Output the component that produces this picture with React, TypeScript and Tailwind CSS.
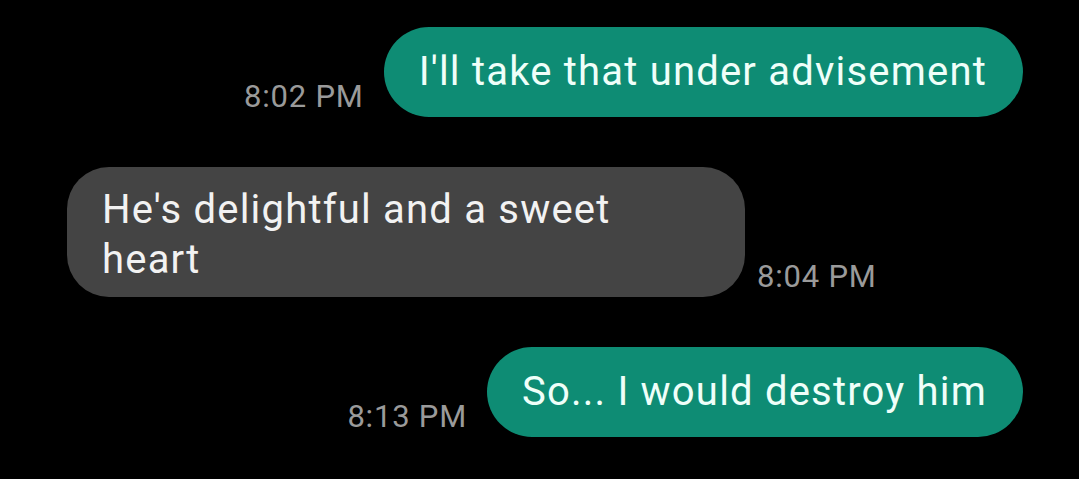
const messages = [
  { id: 1, mine: true, text: "I'll take that under advisement", time: '8:02 PM' },
  { id: 2, mine: false, text: "He's delightful and a sweet heart", time: '8:04 PM' },
  { id: 3, mine: true, text: 'So... I would destroy him', time: '8:13 PM' },
]

function Stamp({ time }: { time: string }) {
  return <span className="text-[31px] leading-none tracking-[0.8px] text-[#9a9a9a] mb-[5px] shrink-0">{time}</span>
}

export default function App() {
  return (
    <div className="w-[1079px] h-[479px] bg-black overflow-hidden pl-[67px] pr-[56px] pt-[27px] flex flex-col gap-[50px]" style={{ fontFamily: 'Roboto, "Noto Sans", sans-serif' }}>
      {messages.map((m) =>
        m.mine ? (
          <div key={m.id} className="flex justify-end items-end gap-5">
            <Stamp time={m.time} />
            <div className="bg-[#0e8c74] text-[#effff9] text-[40px] tracking-[1.2px] leading-[50px] rounded-full pl-[35px] pr-[36px] py-5">{m.text}</div>
          </div>
        ) : (
          <div key={m.id} className="flex items-end gap-3">
            <div className="w-[678px] bg-[#444444] text-[#f2f2f2] text-[40px] tracking-[1.2px] leading-[50px] rounded-[42px] pl-[35px] pr-[35px] pt-[18px] pb-[12px]">{m.text}</div>
            <Stamp time={m.time} />
          </div>
        )
      )}
    </div>
  )
}
